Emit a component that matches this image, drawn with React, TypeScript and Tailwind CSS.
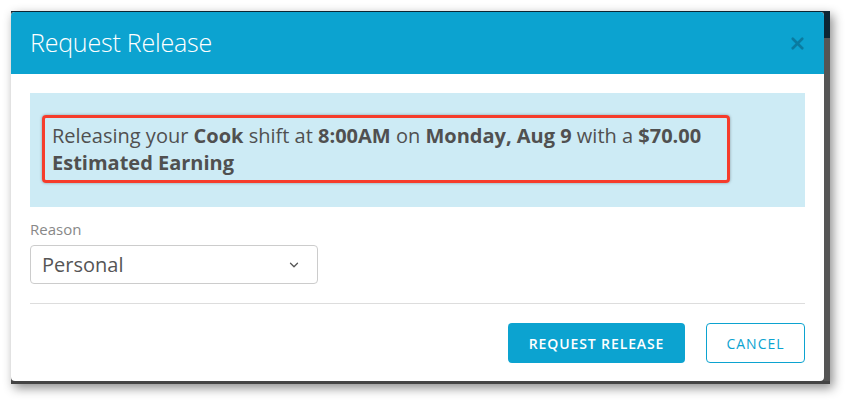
import { ChevronDown, X } from 'lucide-react';

function App() {
  return (
    <div className="w-[847px] h-[403px] bg-white pt-[11px] pl-[11px] font-['Open_Sans',sans-serif]">
      <div className="w-[819px] flex flex-col border-t border-[#0d2533] bg-[#4b4b4b] shadow-[3px_4px_10px_rgba(0,0,0,0.45)]">
        <div className="flex">
          {/* modal */}
          <div className="w-[813px] h-[369px] bg-white rounded-[4px] overflow-hidden flex flex-col">
            <div className="h-[62px] bg-[#0ca3d0] flex items-center justify-between pl-[19px] pr-[17px]">
              <h1 className="text-[25px] font-light text-white tracking-[-0.2px]">Request Release</h1>
              <X className="w-[19px] h-[19px] text-[#0a7ba0]" strokeWidth={3.4} />
            </div>
            <div className="px-[19px] pt-[19px]">
              <div className="h-[114px] bg-[#cdebf5] pt-[22px] pl-[12px]">
                <div className="w-[688px] h-[68px] border-[3px] border-[#f63c2b] rounded-[4px] shadow-[0_0_3px_rgba(0,0,0,0.35)] pl-[7px] pt-[4px]">
                  <p className="text-[20px] leading-[27px] text-[#505050]">
                    Releasing your <b className="font-bold">Cook</b> shift at <b className="font-bold">8:00AM</b> on{' '}
                    <b className="font-bold">Monday, Aug 9</b> with a <b className="font-bold">$70.00 Estimated Earning</b>
                  </p>
                </div>
              </div>
              <div className="mt-[13px] text-[15px] leading-[19px] text-[#888]">Reason</div>
              <div className="mt-[6px] w-[288px] h-[39px] border border-[#ccc] rounded-[4px] flex items-center justify-between pl-[11px] pr-[16px]">
                <span className="text-[20px] text-[#555]">Personal</span>
                <ChevronDown className="w-[14px] h-[14px] text-[#555]" strokeWidth={2.2} />
              </div>
              <div className="mt-[19px] h-px bg-[#ddd]" />
              <div className="mt-[19px] flex justify-end gap-[21px]">
                <button className="w-[177px] h-[40px] rounded-[4px] bg-[#0ca3d0] text-white text-[14px] font-semibold tracking-[0.9px]">
                  REQUEST RELEASE
                </button>
                <button className="w-[99px] h-[40px] rounded-[4px] border border-[#0ca3d0] text-[#0ca3d0] text-[14px] tracking-[1px]">
                  CANCEL
                </button>
              </div>
            </div>
          </div>
          <div className="w-[6px] flex flex-col">
            <div className="h-[26px] bg-[#0d2533]" />
            <div className="flex-1 bg-[#555]" />
          </div>
        </div>
        <div className="h-[3px] bg-[#444]" />
      </div>
    </div>
  );
}

export default App;
